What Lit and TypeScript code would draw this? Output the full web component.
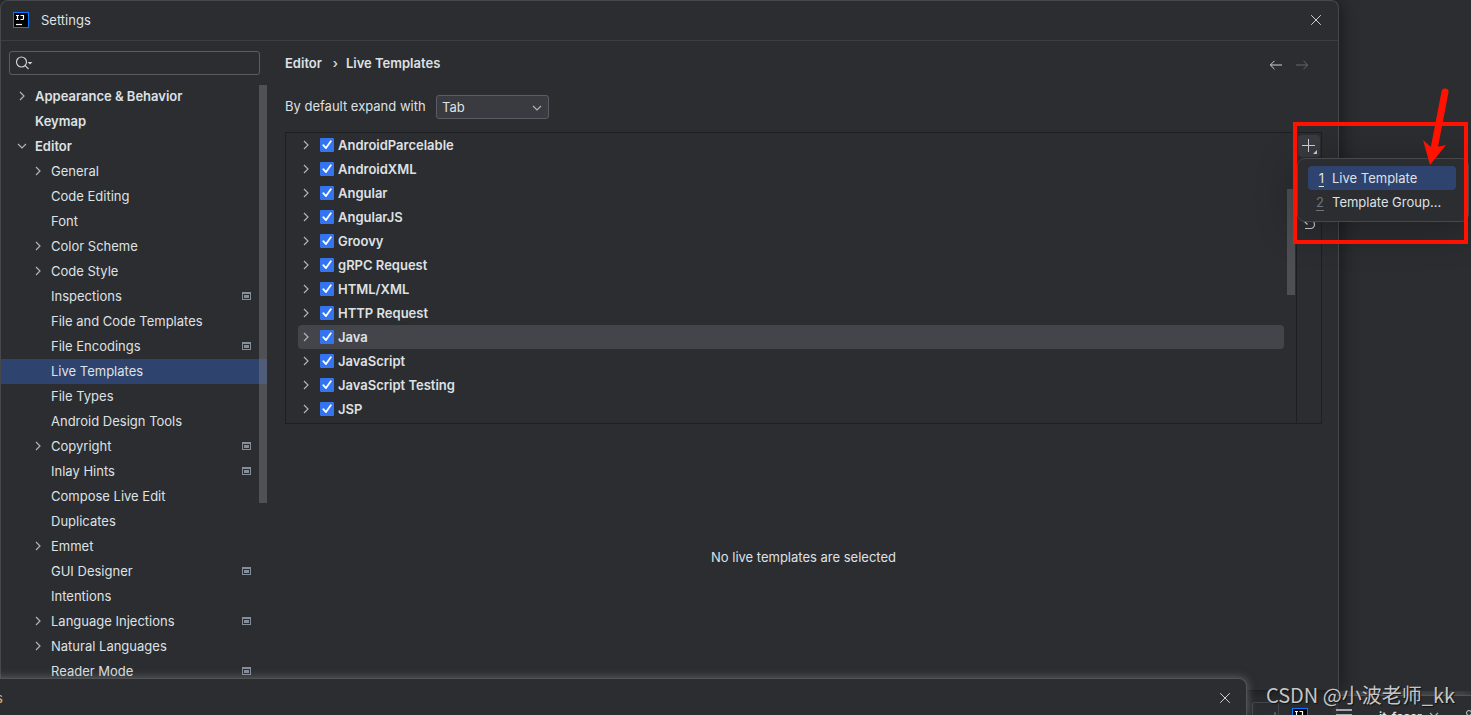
import { LitElement, html, svg, css, nothing } from "lit";
import { customElement, state } from "lit/decorators.js";
import { classMap } from "lit/directives/class-map.js";

type Arrow = "right" | "down" | "";
interface Item { label: string; arrow?: Arrow; top?: boolean; project?: boolean; }

const ITEMS: Item[] = [
  { label: "Appearance & Behavior", arrow: "right", top: true },
  { label: "Keymap", top: true },
  { label: "Editor", arrow: "down", top: true },
  { label: "General", arrow: "right" },
  { label: "Code Editing" },
  { label: "Font" },
  { label: "Color Scheme", arrow: "right" },
  { label: "Code Style", arrow: "right" },
  { label: "Inspections", project: true },
  { label: "File and Code Templates" },
  { label: "File Encodings", project: true },
  { label: "Live Templates" },
  { label: "File Types" },
  { label: "Android Design Tools" },
  { label: "Copyright", arrow: "right", project: true },
  { label: "Inlay Hints", project: true },
  { label: "Compose Live Edit" },
  { label: "Duplicates" },
  { label: "Emmet", arrow: "right" },
  { label: "GUI Designer", project: true },
  { label: "Intentions" },
  { label: "Language Injections", arrow: "right", project: true },
  { label: "Natural Languages", arrow: "right" },
  { label: "Reader Mode", project: true },
];

const GROUPS = [
  "AndroidParcelable", "AndroidXML", "Angular", "AngularJS", "Groovy", "gRPC Request",
  "HTML/XML", "HTTP Request", "Java", "JavaScript", "JavaScript Testing", "JSP",
];

const chevron = (dir: Arrow = "right") => html`<svg class="chev" width="16" height="16" viewBox="0 0 16 16" aria-hidden="true">
  ${dir === "down"
    ? svg`<path d="M4 6l4 4 4-4" />`
    : svg`<path d="M6 4l4 4-4 4" />`}
</svg>`;

const ideLogo = html`<svg width="16" height="16" viewBox="0 0 16 16" aria-hidden="true">
  <rect x="0.5" y="0.5" width="15" height="15" fill="#000" stroke="#087cfa" />
  <path d="M3 3.5h3M4.5 3.5v4M3 7.5h3M7.5 3.5H10.5V6.5Q10.5 7.5 9.5 7.5H7.5" fill="none" stroke="#fff" stroke-width="1.2" />
  <path d="M3 12.5h6" stroke="#fff" stroke-width="1.2" />
</svg>`;

const cross = html`<svg class="line" width="16" height="16" viewBox="0 0 16 16" aria-hidden="true"><path d="M3.2 3.2l9.6 9.6M12.8 3.2l-9.6 9.6" /></svg>`;

@customElement("app-root")
export class AppRoot extends LitElement {
  @state() private selected = "Live Templates";
  @state() private group = "Java";

  static styles = css`
    :host {
      display: block;
      position: relative;
      height: 100vh;
      overflow: hidden;
      background: #2b2d30;
      color: #dfe1e5;
      font: 13px/16px Inter, "Noto Sans", sans-serif;
    }
    * { box-sizing: border-box; }
    button { font: inherit; color: inherit; background: none; border: 0; padding: 0; margin: 0; text-align: left; }
    svg { display: block; flex: none; }
    .line { fill: none; stroke: #ced0d6; }
    .dialog {
      margin-right: 132px;
      height: calc(100% - 24px);
      display: flex;
      flex-direction: column;
      border: 1px solid #46484b;
      border-radius: 8px 8px 0 0;
      border-bottom-color: #1e1f22;
      background: #2b2d30;
      box-shadow: 2px 0 18px rgba(0, 0, 0, 0.45);
    }
    .title { display: flex; align-items: center; gap: 12px; height: 40px; flex: none; padding: 0 14px 2px 12px; border-bottom: 1px solid #3c3e41; }
    .title h1 { flex: 1; margin: 0; font: inherit; }
    .body { flex: 1; display: flex; min-height: 0; }
    .side { width: 266px; flex: none; display: flex; flex-direction: column; padding-top: 10px; }
    .search { display: flex; align-items: center; margin: 0 7px 9px 8px; height: 24px; border: 1px solid #5a5d63; border-radius: 3px; padding-left: 5px; }
    .search input { flex: 1; min-width: 0; border: 0; outline: 0; background: none; color: inherit; font: inherit; }
    .scroller { flex: 1; min-height: 0; display: flex; position: relative; overflow: hidden; }
    .tree { flex: 1; list-style: none; margin: 0; padding: 0; }
    .item { display: flex; align-items: center; width: 100%; height: 25px; padding: 0 16px 2px 29px; }
    .item.top { padding-left: 13px; font-weight: 600; }
    .item.on { background: #2e436e; }
    .slot { width: 16px; height: 16px; margin-right: 5px; flex: none; }
    .label { flex: 1; white-space: nowrap; }
    .chev { fill: none; stroke: #b0b3ba; stroke-width: 1.2; }
    .thumb { position: absolute; right: 0; top: 1px; width: 8px; height: 418px; background: rgba(128, 130, 135, 0.42); }
    .main { flex: 1; min-width: 0; display: flex; flex-direction: column; padding: 13px 16px 0 18px; }
    .crumbs { display: flex; align-items: center; height: 18px; font-weight: 600; }
    .crumbs a { color: inherit; text-decoration: none; }
    .crumbs .sep { width: 24px; padding-left: 3px; text-align: center; font-weight: 500; }
    .nav { margin-left: auto; display: flex; gap: 10px; padding: 3px 12px 0 0; }
    .dim { opacity: 0.35; }
    .expand { display: flex; align-items: center; gap: 8px; margin: 23px 0 13px; height: 24px; }
    .expand label { min-width: 143px; padding-bottom: 2px; }
    .pick { position: relative; width: 113px; }
    .pick select { appearance: none; display: block; width: 100%; height: 24px; padding: 0 5px; border: 1px solid #5a5d63; border-radius: 3px; background: #393b40; color: inherit; font: inherit; }
    .pick svg { position: absolute; right: 4px; top: 5px; pointer-events: none; }
    .panel { display: flex; height: 292px; flex: none; border: 1px solid #1e1f22; }
    .list { flex: 1; list-style: none; margin: 0; padding: 0 12px; position: relative; }
    .row { display: flex; align-items: center; height: 24px; border-radius: 4px; font-weight: 600; }
    .row.on { background: #43454a; }
    .row button { margin-right: 6px; }
    .row label { display: flex; align-items: center; gap: 4px; }
    .tick { display: grid; width: 14px; height: 14px; }
    .tick > * { grid-area: 1 / 1; }
    .tick input { appearance: none; margin: 0; width: 14px; height: 14px; border-radius: 1px; background: #3574f0; }
    .tick input:not(:checked) + svg { display: none; }
    .tick svg { pointer-events: none; z-index: 1; }
    .listthumb { position: absolute; right: 1px; top: 56px; width: 8px; height: 106px; background: #4d4f53; }
    .tools { width: 25px; flex: none; border-left: 1px solid #1e1f22; display: flex; flex-direction: column; align-items: center; padding-top: 2px; gap: 4px; }
    .tool { display: grid; place-items: center; width: 22px; height: 22px; border-radius: 4px; }
    .tool.on { background: #393b40; }
    .empty { flex: 1; display: grid; place-items: center; }
    .popup {
      position: absolute; left: 1297px; top: 158px; width: 172px; height: 64px;
      padding: 7px 10px; border: 1px solid #46484b; border-radius: 8px; background: #2b2d30;
      box-shadow: 0 6px 40px rgba(0, 0, 0, 0.3);
    }
    .popup button { display: flex; align-items: center; width: 148px; height: 24px; gap: 8px; padding-left: 7px; border-radius: 4px; white-space: nowrap; }
    .popup button.on { background: #2e436e; }
    .popup u { width: 9px; text-align: right; text-underline-offset: 3px; }
    .popup .grey { color: #6f737a; }
    .mark { position: absolute; left: 1293px; top: 88px; pointer-events: none; }
    .ide {
      position: absolute; left: 1251px; right: 0; bottom: 0; height: 24px;
      display: flex; align-items: flex-start; overflow: hidden; padding-top: 14px;
    }
    .ide > * { flex: none; }
    .ide .band { position: absolute; left: 87px; right: 0; top: 4px; height: 20px; border-top: 1px solid #505254; box-shadow: 0 -2px 10px rgba(140, 140, 140, 0.4); }
    .ide .box { position: absolute; left: 1px; top: 11px; width: 27px; height: 24px; border: 1px solid #43454a; border-radius: 3px; }
    .ide .box svg { margin: 8px 0 0 18px; }
    .ide .logo { margin: 3px 28px 0 41px; }
    .ide .name { margin: 4px 4px 0 27px; font-weight: 600; font-size: 12px; }
    .ide .user { margin: 4px 0 0 auto; }
    .front {
      position: absolute; left: -8px; right: 224px; bottom: 0; height: 37px;
      display: flex; align-items: center; justify-content: space-between; padding: 2px 13px 0 4px;
      border-top: 1px solid #505254; border-right: 1px solid #505254; border-radius: 0 8px 0 0;
      background: #2b2d30; box-shadow: 0 0 10px rgba(140, 140, 140, 0.6);
    }
    .front span { color: #d5b778; }
    .credit { position: absolute; right: 16px; bottom: 6px; font: 20px/28px "Noto Sans CJK SC", sans-serif; color: #c4c5c6; text-shadow: 1px 1px 1px #111; white-space: nowrap; }
  `;

  private renderItem(i: Item) {
    return html`<li><button class=${classMap({ item: true, top: !!i.top, on: i.label === this.selected })}
      @click=${() => (this.selected = i.label)}>
      <span class="slot">${i.arrow ? chevron(i.arrow) : nothing}</span>
      <span class="label">${i.label}</span>
      ${i.project
        ? html`<svg width="9" height="8" viewBox="0 0 9 8" aria-hidden="true"><rect x="0.5" y="0.5" width="8" height="7" fill="none" stroke="#868e99" /><path d="M0 0h9v2H0zM2 3h5v3H2z" fill="#868e99" /></svg>`
        : nothing}
    </button></li>`;
  }

  private renderGroup(name: string) {
    return html`<li class=${classMap({ row: true, on: name === this.group })} @click=${() => (this.group = name)}>
      <button aria-label="Expand ${name}">${chevron()}</button>
      <label><span class="tick"><input type="checkbox" checked />
        <svg width="14" height="14" viewBox="0 0 14 14" aria-hidden="true"><path d="M3.3 7.2l2.7 2.9 4.8-6.8" fill="none" stroke="#fff" stroke-width="1.8" stroke-linecap="round" stroke-linejoin="round" /></svg>
      </span>${name}</label>
    </li>`;
  }

  render() {
    return html`
      <section class="dialog">
        <header class="title">${ideLogo}<h1>Settings</h1><button aria-label="Close settings">${cross}</button></header>
        <div class="body">
          <nav class="side">
            <label class="search">
              <svg width="19" height="16" viewBox="0 0 19 16" fill="none" stroke="#ced0d6" stroke-width="1.2" aria-label="Search"><circle cx="6.5" cy="7" r="5" /><path d="M10.2 10.7l3.3 3.3" /><path d="M12.5 7h5l-2.500 2.500z" fill="#ced0d6" stroke="none" /></svg>
              <input type="text" aria-label="Search settings" />
            </label>
            <div class="scroller">
              <ul class="tree">${ITEMS.map((i) => this.renderItem(i))}</ul>
              <div class="thumb"></div>
            </div>
          </nav>
          <main class="main">
            <div class="crumbs">
              <a href="#editor">Editor</a><span class="sep">›</span><a href="#live">Live Templates</a>
              <div class="nav">
                <button aria-label="Back"><svg class="line" width="16" height="16" viewBox="0 0 16 16"><path d="M14 8H2.5M6.5 3.8L2.3 8l4.2 4.2" /></svg></button>
                <button class="dim" aria-label="Forward"><svg class="line" width="16" height="16" viewBox="0 0 16 16"><path d="M2 8h11.5M9.5 3.8L13.7 8l-4.2 4.2" /></svg></button>
              </div>
            </div>
            <div class="expand">
              <label for="expand">By default expand with</label>
              <div class="pick"><select id="expand"><option>Tab</option><option>Enter</option><option>Space</option></select>${chevron("down")}</div>
            </div>
            <div class="panel">
              <ul class="list">${GROUPS.map((g) => this.renderGroup(g))}<li class="listthumb"></li></ul>
              <div class="tools">
                <button class="tool on" aria-label="Add"><svg class="line" width="18" height="18" viewBox="0 0 18 18"><path d="M8.5 2v13M2 8.5h13" /><path d="M17 13v4h-4z" fill="#ced0d6" stroke="none" /></svg></button>
                <button class="tool" aria-label="Remove"></button>
                <button class="tool" aria-label="Duplicate"></button>
                <button class="tool" aria-label="Restore defaults"><svg class="line" width="16" height="16" viewBox="0 0 16 16"><path d="M6 1L2.500 4.500l4 4M3 4.500h6.500a4 4 0 0 1 0 8H4" stroke-width="1.2" /></svg></button>
              </div>
            </div>
            <div class="empty">No live templates are selected</div>
          </main>
        </div>
      </section>

      <div class="ide">
        <div class="band"></div>
        <div class="box"><svg width="8" height="12" viewBox="0 0 8 12" aria-hidden="true"><path d="M1 11L4 1l3 10" fill="none" stroke="#5a5d63" /></svg></div>
        <div class="logo">${ideLogo}</div>
        <svg width="16" height="16" viewBox="0 0 16 16"><path d="M0 5h16M0 10h16" stroke="#ced0d6" stroke-width="1.5" /></svg>
        <span class="name">it-foser</span>
        <svg class="chev" width="16" height="16" viewBox="0 0 16 16" aria-hidden="true"><path d="M4 8l4 4 4-4" /></svg>
        <svg class="line user" width="6" height="12" viewBox="0 0 6 12" aria-hidden="true"><circle cx="4" cy="4" r="2.5" /></svg>
      </div>

      <section class="front"><span>s</span><button aria-label="Close">${cross}</button></section>

      <div class="popup" role="menu">
        <button class="on" role="menuitem"><u>1</u>Live Template</button>
        <button role="menuitem"><u class="grey">2</u>Template Group...</button>
      </div>

      <svg class="mark" width="178" height="158" viewBox="0 0 178 158" aria-hidden="true">
        <rect x="2" y="36" width="171" height="118" fill="none" stroke="#ff1200" stroke-width="4" />
        <path d="M152 4L141 61" stroke="#ff1200" stroke-width="7" stroke-linecap="round" />
        <path d="M137 77L130 52L139 60L153 57z" fill="#ff1200" />
      </svg>

      <div class="credit">CSDN @小波老师_kk</div>
    `;
  }
}
